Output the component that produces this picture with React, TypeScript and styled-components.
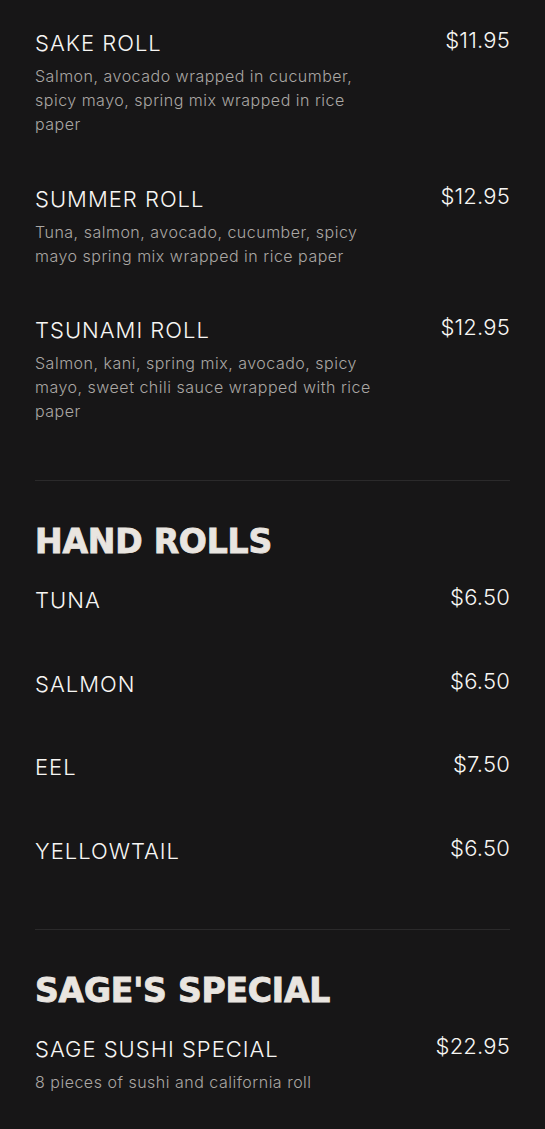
import styled, { createGlobalStyle } from 'styled-components';

type MenuItem = {
  name: string;
  price: string;
  desc?: string[];
};

type MenuSection = {
  title?: string;
  items: MenuItem[];
};

const sections: MenuSection[] = [
  {
    items: [
      {
        name: 'SAKE ROLL',
        price: '$11.95',
        desc: ['Salmon, avocado wrapped in cucumber,', 'spicy mayo, spring mix wrapped in rice', 'paper'],
      },
      {
        name: 'SUMMER ROLL',
        price: '$12.95',
        desc: ['Tuna, salmon, avocado, cucumber, spicy', 'mayo spring mix wrapped in rice paper'],
      },
      {
        name: 'TSUNAMI ROLL',
        price: '$12.95',
        desc: ['Salmon, kani, spring mix, avocado, spicy', 'mayo, sweet chili sauce wrapped with rice', 'paper'],
      },
    ],
  },
  {
    title: 'HAND ROLLS',
    items: [
      { name: 'TUNA', price: '$6.50' },
      { name: 'SALMON', price: '$6.50' },
      { name: 'EEL', price: '$7.50' },
      { name: 'YELLOWTAIL', price: '$6.50' },
    ],
  },
  {
    title: "SAGE'S SPECIAL",
    items: [
      {
        name: 'SAGE SUSHI SPECIAL',
        price: '$22.95',
        desc: ['8 pieces of sushi and california roll'],
      },
    ],
  },
];

const GlobalStyle = createGlobalStyle`
  html, body {
    margin: 0;
    padding: 0;
    background: #171617;
  }
`;

const Page = styled.div`
  font-family: Inter, 'Noto Sans', sans-serif;
  background: #171617;
  min-height: 1129px;
  padding: 28px 35px 0;
  box-sizing: border-box;
`;

const Section = styled.section`
  padding-bottom: 57px;

  & + & {
    border-top: 1px solid #2b2a2b;
    padding-top: 40px;
  }
`;

const SectionTitle = styled.h2`
  margin: 0 0 23px;
  font-family: 'DejaVu Sans', 'Liberation Sans', sans-serif;
  font-weight: 700;
  font-size: 33px;
  line-height: 41px;
  color: #e9e5e0;
  -webkit-text-stroke: 0.9px #e9e5e0;
  letter-spacing: -0.2px;
`;

const ItemList = styled.div`
  display: flex;
  flex-direction: column;
  gap: 47.5px;
`;

const Item = styled.div<{ $plain: boolean }>`
  display: flex;
  justify-content: space-between;
  align-items: flex-start;
  min-height: ${(p) => (p.$plain ? '36px' : '0')};
`;

const ItemText = styled.div`
  display: flex;
  flex-direction: column;
  gap: 6px;
`;

const ItemName = styled.div`
  font-size: 22px;
  line-height: 30px;
  font-weight: 300;
  color: #f7f6f4;
  letter-spacing: 1px;
`;

const ItemDesc = styled.div`
  font-size: 16px;
  line-height: 24px;
  font-weight: 300;
  color: #aaa7a4;
  letter-spacing: 0.5px;
  white-space: nowrap;
`;

const Price = styled.div`
  font-size: 22px;
  line-height: 25px;
  font-weight: 300;
  color: #f7f6f4;
  letter-spacing: 0.2px;
`;

export default function App() {
  return (
    <>
      <GlobalStyle />
      <Page>
        {sections.map((section, i) => (
          <Section key={i}>
            {section.title && <SectionTitle>{section.title}</SectionTitle>}
            <ItemList>
              {section.items.map((item) => (
                <Item key={item.name} $plain={!item.desc}>
                  <ItemText>
                    <ItemName>{item.name}</ItemName>
                    {item.desc && (
                      <ItemDesc>
                        {item.desc.map((line, j) => (
                          <div key={j}>{line}</div>
                        ))}
                      </ItemDesc>
                    )}
                  </ItemText>
                  <Price>{item.price}</Price>
                </Item>
              ))}
            </ItemList>
          </Section>
        ))}
      </Page>
    </>
  );
}
